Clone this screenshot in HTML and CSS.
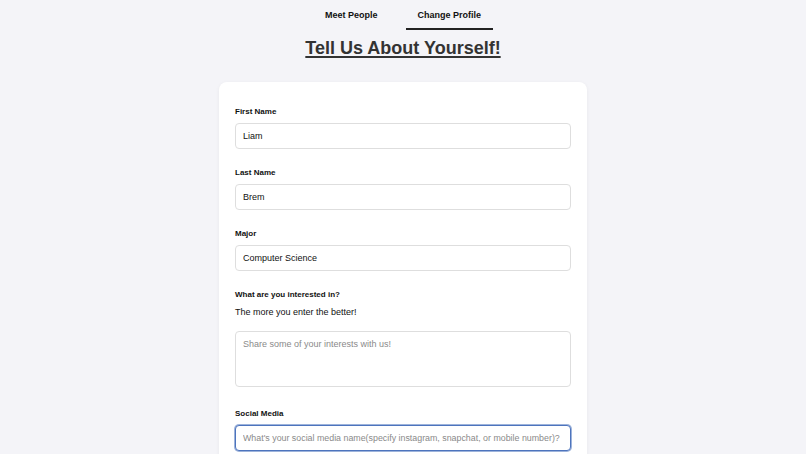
FILE: index.html
```html
<!DOCTYPE html>
<html lang="en">
<head>
<meta charset="utf-8">
<title>Change Profile</title>
<link rel="stylesheet" href="styles.css">
</head>
<body>
<nav class="tabs">
  <a class="tab" href="#">Meet People</a>
  <a class="tab tab-active" href="#">Change Profile</a>
</nav>
<h1 class="title">Tell Us About Yourself!</h1>
<form class="card">
  <label class="label" for="first">First Name</label>
  <input class="field" id="first" type="text" value="Liam">
  <label class="label" for="last">Last Name</label>
  <input class="field" id="last" type="text" value="Brem">
  <label class="label" for="major">Major</label>
  <input class="field" id="major" type="text" value="Computer Science">
  <label class="label" for="interests">What are you interested in?</label>
  <p class="hint">The more you enter the better!</p>
  <textarea class="field area" id="interests" placeholder="Share some of your interests with us!"></textarea>
  <label class="label" for="social">Social Media</label>
  <input class="field field-focus" id="social" type="text" placeholder="What's your social media name(specify instagram, snapchat, or mobile number)?">
</form>
</body>
</html>
```
FILE: styles.css
```css
html, body {
  margin: 0;
  padding: 0;
}
body {
  background: #f4f4f8;
  font-family: "Liberation Sans", Arial, sans-serif;
  color: #111;
}
.tabs {
  display: flex;
  justify-content: center;
  gap: 16px;
}
.tab {
  display: block;
  padding: 10px 12px 7px;
  font-size: 9px;
  line-height: 11px;
  font-weight: bold;
  color: #111;
  text-decoration: none;
  border-bottom: 2px solid transparent;
}
.tab-active {
  border-bottom-color: #222;
}
.title {
  margin: 8px 0 24px;
  text-align: center;
  font-size: 18px;
  line-height: 20px;
  font-weight: bold;
  color: #333;
  text-decoration: underline;
  text-decoration-thickness: 2px;
  text-underline-offset: 2px;
}
.card {
  width: 368px;
  box-sizing: border-box;
  margin: 0 auto;
  padding: 23px 16px 30px;
  background: #fff;
  border-radius: 8px;
  box-shadow: 0 1px 4px rgba(0, 0, 0, 0.05);
}
.label {
  display: block;
  font-size: 8px;
  line-height: 13px;
  font-weight: bold;
  color: #111;
  margin-bottom: 5px;
}
.hint {
  margin: 0 0 13px;
  font-size: 9px;
  line-height: 12px;
  color: #111;
}
.field {
  display: block;
  width: 100%;
  box-sizing: border-box;
  height: 26px;
  margin: 0 0 17px;
  padding: 0 7px;
  font-family: "Liberation Sans", Arial, sans-serif;
  font-size: 9px;
  color: #111;
  background: #fff;
  border: 1px solid #dedede;
  border-radius: 4px;
  outline: none;
}
.field::placeholder {
  color: #8a8a8a;
}
.area {
  height: 56px;
  padding: 6px 7px;
  line-height: 12px;
  resize: none;
  margin-bottom: 20px;
}
.field-focus {
  font-size: 8.85px;
  border-color: #4d74bd;
  box-shadow: 0 0 0 1px rgba(77, 116, 189, 0.55);
}
```
